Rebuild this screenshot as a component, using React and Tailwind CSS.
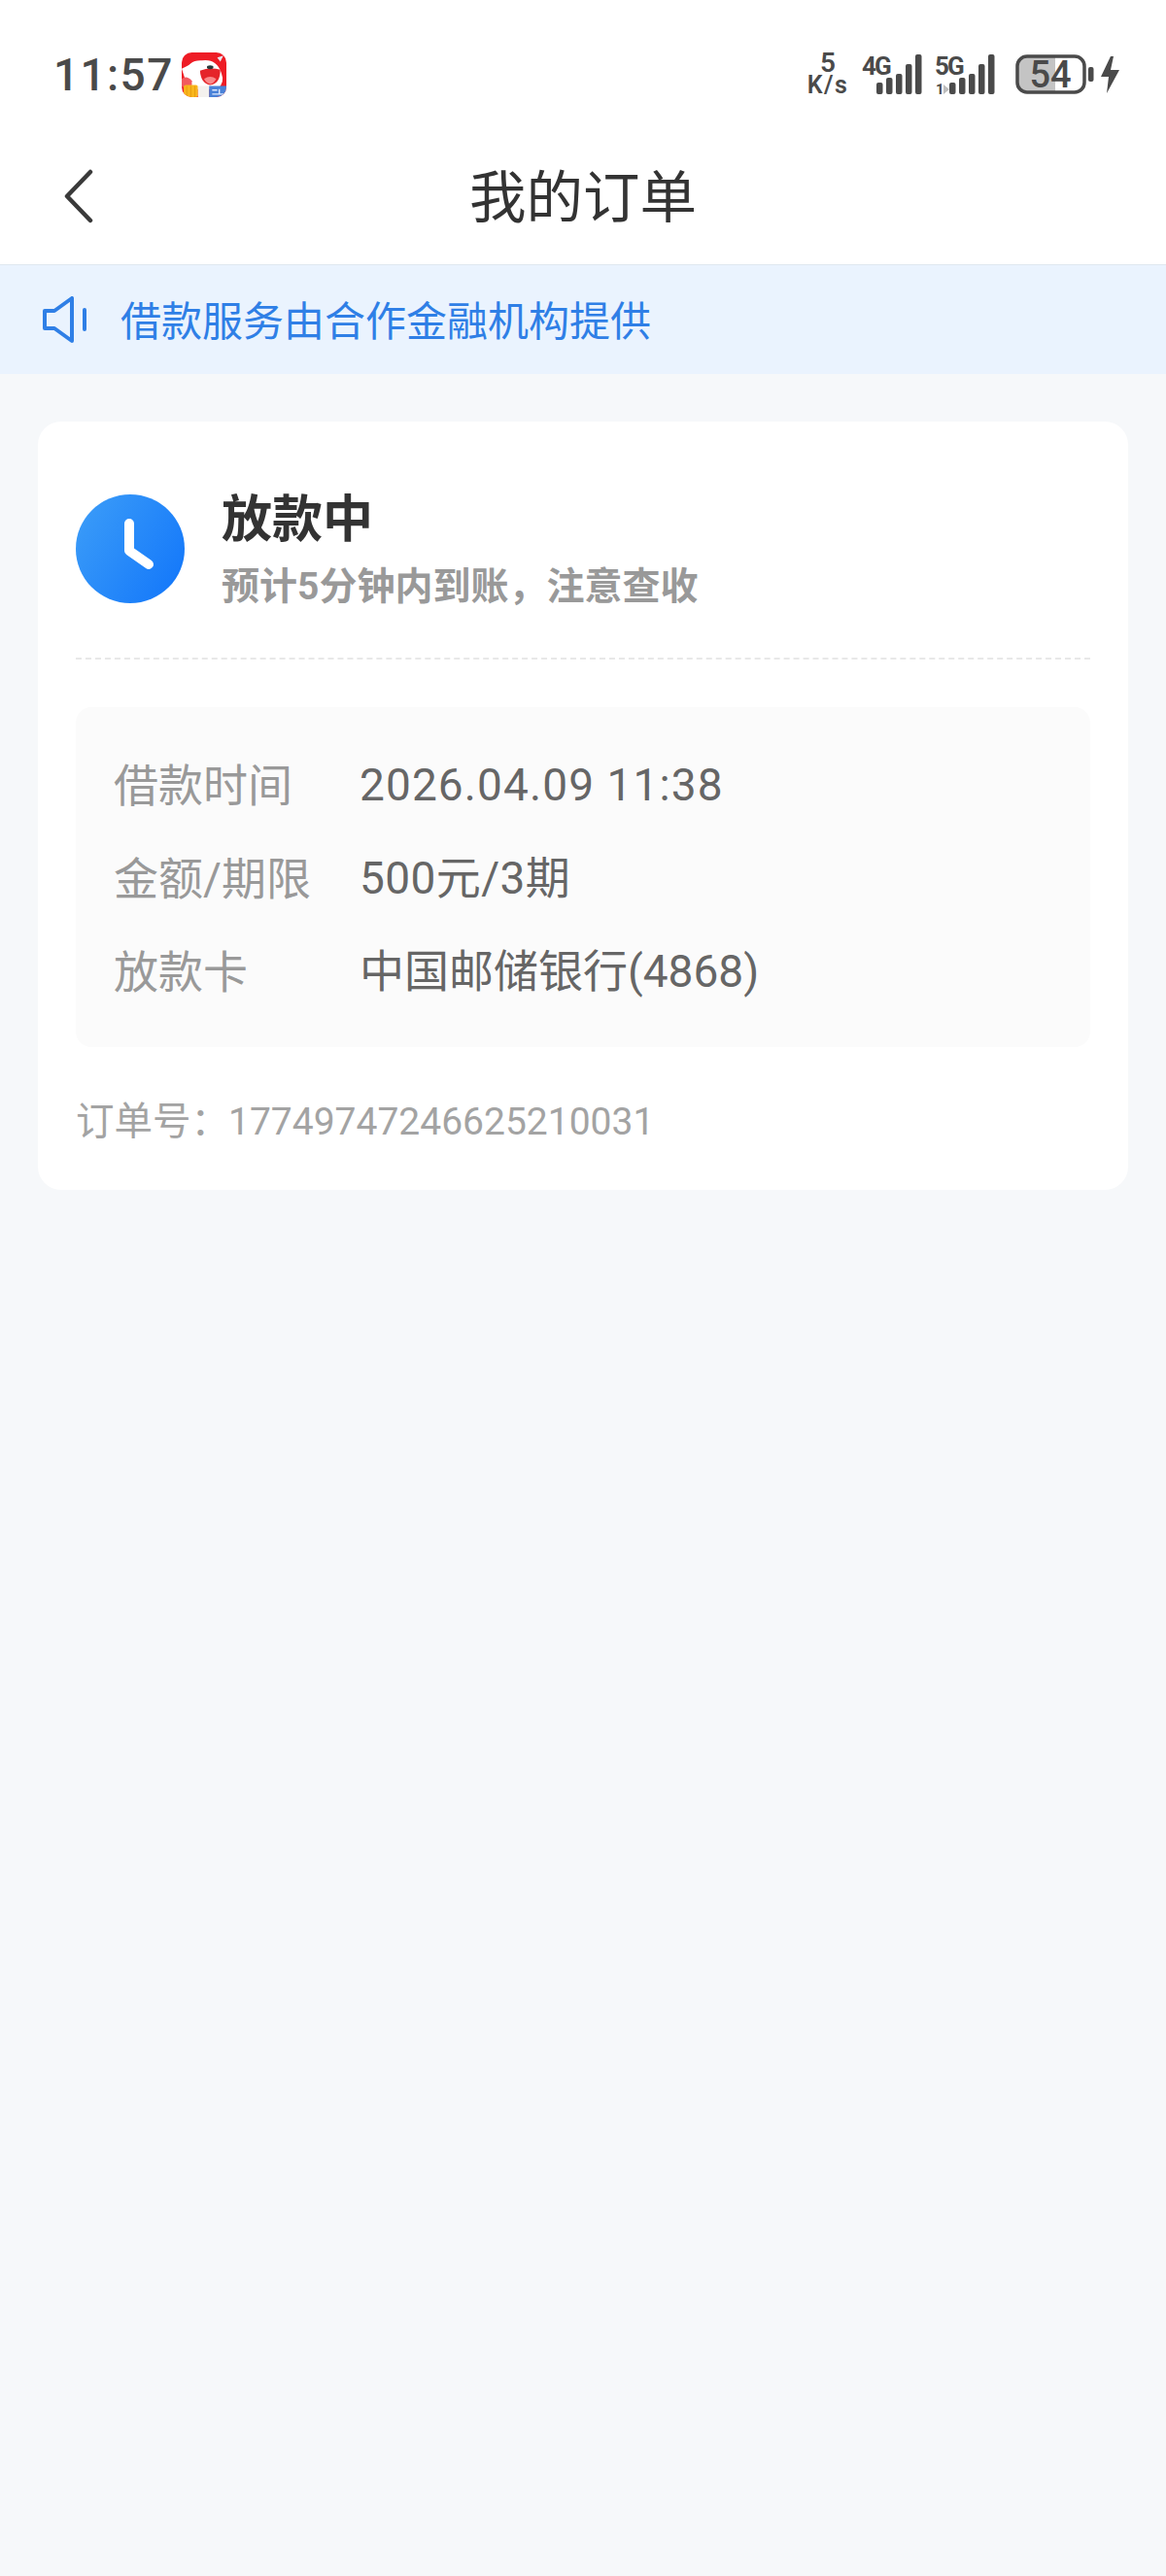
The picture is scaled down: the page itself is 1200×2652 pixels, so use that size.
import React from 'react';

const rows = [
  { label: '借款时间', value: '2026.04.09 11:38', valueClass: 'tracking-[1.1px]' },
  { label: '金额/期限', value: '500元/3期', valueClass: 'tracking-[0.4px]' },
  { label: '放款卡', value: '中国邮储银行(4868)', valueClass: 'tracking-normal' },
];

// Small app badge next to the clock
const AppBadge = () => (
  <svg width="46" height="46" viewBox="0 0 44 44" className="ml-[8px]">
    <defs>
      <clipPath id="badge"><rect width="44" height="44" rx="10" /></clipPath>
    </defs>
    <g clipPath="url(#badge)">
      <rect width="44" height="44" fill="#ee1c25" />
      <path d="M3 20 Q7 7 20 8 Q34 6 39 20 Q43 30 35 36 L7 36 Q2 28 3 20Z" fill="#fff" />
      <path d="M0 16 L10 11 L12 22 L3 25Z" fill="#fff" />
      <path d="M0 26 Q5 22 10 28 L10 34 L0 34Z" fill="#f25a5f" />
      <path d="M18 18 Q28 14 38 17 Q38 31 28 32 Q19 31 18 18Z" fill="#e5252a" />
      <path d="M22 26 Q28 22 34 26 Q31 31 28 31 Q24 30 22 26Z" fill="#f98a8a" />
      <ellipse cx="28" cy="14.5" rx="3.2" ry="1.9" fill="#2b3a3a" />
      <path d="M35 5 L41 3 L38 9Z" fill="#e8e8f0" />
      <rect x="2" y="32" width="14" height="12" rx="2" fill="#f9b61c" />
      <path d="M5 33 V44 M9 33 V44 M13 33 V44" stroke="#e89f10" strokeWidth="1" />
      <rect x="16" y="33" width="11" height="11" fill="#f4f1ee" />
      <rect x="27" y="33" width="17" height="11" fill="#4a82d8" />
      <path d="M30 37 H35 M37 36 V41 M30 41 H41" stroke="#dfe9fb" strokeWidth="1.4" fill="none" />
    </g>
  </svg>
);

const SignalBars = ({ label, sub }) => (
  <svg width="62" height="42" viewBox="0 0 62 42" className="overflow-visible">
    <text x="0" y="21" fontSize="26" fontWeight="700" fill="#4a4a4a" fontFamily="Roboto, sans-serif" letterSpacing="-1.8">{label}</text>
    {sub && (
      <>
        <text x="1" y="41" fontSize="15" fontWeight="700" fill="#4a4a4a" fontFamily="Roboto, sans-serif">1</text>
        <path d="M9 31 L15 36 L9 41Z" fill="#bdbdbd" />
      </>
    )}
    <rect x="15" y="29" width="6.5" height="12" rx="2" fill="#4a4a4a" />
    <rect x="25" y="24" width="6.5" height="17" rx="2" fill="#4a4a4a" />
    <rect x="35" y="20" width="6.5" height="21" rx="2" fill="#4a4a4a" />
    <rect x="45" y="10" width="6.5" height="31" rx="2" fill="#4a4a4a" />
    <rect x="55" y="0" width="6.5" height="41" rx="2" fill="#4a4a4a" />
  </svg>
);

const Battery = () => (
  <svg width="107" height="42" viewBox="0 0 107 42" className="overflow-visible">
    <rect x="2" y="2" width="69" height="37" rx="10" fill="#fff" />
    <path d="M12 2 H41 V39 H12 A10 10 0 0 1 2 29 V12 A10 10 0 0 1 12 2Z" fill="#c4c4c4" />
    <rect x="2" y="2" width="69" height="37" rx="10" fill="none" stroke="#4a4a4a" strokeWidth="3.5" />
    <text x="36" y="33.5" textAnchor="middle" fontSize="38" fontWeight="500" fill="#4a4a4a" fontFamily="Roboto, sans-serif">54</text>
    <rect x="75" y="13" width="5.5" height="15" rx="2" fill="#4a4a4a" />
    <path d="M98 2 L88 23 H96 L94 40 L107 16 H98 L101 2Z" fill="#4a4a4a" />
  </svg>
);

const StatusBar = () => (
  <div className="h-[137px] pt-[54px] pl-[55px] pr-[48px] flex items-start justify-between bg-white">
    <div className="flex items-center h-[46px]">
      <span className="text-[46px] leading-[46px] font-medium tracking-[1.4px] text-[#4a4a4a]">11:57</span>
      <AppBadge />
    </div>
    <div className="flex items-start">
      <div className="w-[44px] flex flex-col items-center text-[#4a4a4a] font-semibold mr-[13px] mt-[-1px]">
        <span className="text-[28px] leading-[24px]">5</span>
        <span className="text-[25px] leading-[21px] tracking-[1.5px]">K/s</span>
      </div>
      <div className="w-[75px] mt-[2px]"><SignalBars label="4G" /></div>
      <div className="w-[83px] mt-[2px]"><SignalBars label="5G" sub /></div>
      <div className="mt-[2px]"><Battery /></div>
    </div>
  </div>
);

export default function App() {
  return (
    <div className="w-[1200px] min-h-[2652px] bg-[#f6f8fa] font-['Roboto','Noto_Sans_CJK_SC',sans-serif]">
      <StatusBar />

      {/* Title bar */}
      <div className="relative h-[135px] bg-white flex items-center justify-center pb-[2px]">
        <svg width="34" height="56" viewBox="0 0 34 56" className="absolute left-[64px] top-[37px]">
          <path d="M29 3 L5 28 L29 53" fill="none" stroke="#3a3a3a" strokeWidth="4.5" strokeLinecap="round" strokeLinejoin="round" />
        </svg>
        <h1 className="text-[58.5px] leading-[70px] font-normal text-[#333333]">我的订单</h1>
      </div>

      {/* Notice */}
      <div className="h-[113px] bg-[#eaf3fe] border-t border-[#e0e8f0] flex items-center pl-[44px]">
        <svg width="46" height="48" viewBox="0 0 46 48" className="mr-[34px]">
          <path d="M2 15 H12 L30 2 V46 L12 33 H2Z" fill="none" stroke="#2f7fe6" strokeWidth="4" strokeLinejoin="round" />
          <path d="M43 14 V34" stroke="#2f7fe6" strokeWidth="4" strokeLinecap="round" />
        </svg>
        <span className="pt-[6px] text-[42px] leading-[50px] text-[#2f7fe6]">借款服务由合作金融机构提供</span>
      </div>

      {/* Order card */}
      <div className="mx-[39px] mt-[49px] bg-white rounded-[24px] px-[39px] h-[791px]">
        <div className="h-[245px] pt-[72px] border-b-2 border-dashed border-[#e8e8e8] flex items-start">
          <svg width="112" height="112" viewBox="0 0 112 112" className="shrink-0 mt-[3px]">
            <defs>
              <linearGradient id="clock" x1="0" y1="0.2" x2="1" y2="0.8">
                <stop offset="0" stopColor="#3a9bf8" />
                <stop offset="1" stopColor="#1478fa" />
              </linearGradient>
            </defs>
            <circle cx="56" cy="56" r="56" fill="url(#clock)" />
            <path d="M55 30 V58 L75 72" fill="none" stroke="#fff" strokeWidth="10" strokeLinecap="round" strokeLinejoin="round" />
          </svg>
          <div className="ml-[38px]">
            <div className="text-[52px] leading-[60px] font-bold text-[#333333]">放款中</div>
            <div className="mt-[13px] text-[39px] leading-[50px] font-bold text-[#999999]">预计5分钟内到账，注意查收</div>
          </div>
        </div>

        <div className="mt-[49px] h-[350px] bg-[#fbfbfb] rounded-[16px] px-[39px] pt-[32px]">
          {rows.map((row) => (
            <div key={row.label} className="flex items-center h-[96px]">
              <span className="w-[253px] pt-[2px] text-[46px] text-[#999999]">{row.label}</span>
              <span className={`text-[46px] text-[#666666] ${row.valueClass}`}>{row.value}</span>
            </div>
          ))}
        </div>

        <div className="mt-[50px] h-[54px] flex items-center text-[#a3a3a3]">
          <span className="text-[39.5px]">订单号：</span>
          <span className="text-[39px] ml-[-1px]">17749747246625210031</span>
        </div>
      </div>
    </div>
  );
}
